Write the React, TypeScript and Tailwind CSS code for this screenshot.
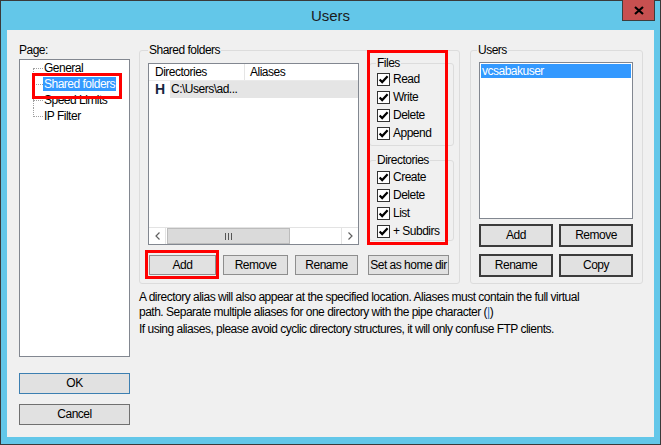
import React from 'react'

const Btn = ({ label, className = '' }: { label: string; className?: string }) => (
  <div className={`flex items-center justify-center whitespace-nowrap bg-[#e1e1e1] text-black ${className}`}>{label}</div>
)

const Check = ({ label }: { label: string }) => (
  <div className="flex h-[18px] items-center">
    <div className="flex h-[13px] w-[13px] items-center justify-center border border-[#333] bg-white">
      <svg width="11" height="11" viewBox="0 0 11 11">
        <path d="M1.6 5.4 L4.2 8.1 L9.6 2.3" fill="none" stroke="#000" strokeWidth="2.2" />
      </svg>
    </div>
    <span className="ml-[3px] whitespace-nowrap">{label}</span>
  </div>
)

type Pos = 'first' | 'mid' | 'last'

const TreeRow = ({ label, pos, selected }: { label: string; pos: Pos; selected?: boolean }) => (
  <div className="flex h-[16px] items-center">
    <div className="relative ml-[13px] h-[16px] w-[10px]">
      <div
        className={`absolute left-0 w-0 border-l border-dotted border-[#a0a0a0] ${
          pos === 'first' ? 'top-[8px] bottom-0' : pos === 'last' ? 'top-0 h-[9px]' : 'top-0 bottom-0'
        }`}
      />
      <div className="absolute left-0 top-[8px] w-[10px] border-t border-dotted border-[#a0a0a0]" />
    </div>
    <span className={`whitespace-nowrap px-[1px] leading-[14px] ${selected ? 'bg-[#3399ff] text-white' : ''}`}>{label}</span>
  </div>
)

const Chevron = ({ dir }: { dir: 'l' | 'r' }) => (
  <svg width="5" height="8" viewBox="0 0 5 8">
    <path d={dir === 'l' ? 'M4.5 0.5 L1 4 L4.5 7.5' : 'M0.5 0.5 L4 4 L0.5 7.5'} fill="none" stroke="#606060" strokeWidth="1.2" />
  </svg>
)

export default function App() {
  return (
    <div className="flex h-[445px] w-[661px] flex-col border border-[#3a3a3a] bg-[#63c7e9] font-['Liberation_Sans',Arial,sans-serif] text-[12px] leading-[15px] tracking-[-0.5px] text-black">
      {/* title bar */}
      <div className="relative flex h-[29px] items-center justify-center">
        <span className="text-[15px] tracking-normal text-[#1b1b1b]">Users</span>
        <div className="absolute right-[5px] top-[-1px] flex h-[21px] w-[33px] items-center justify-center border-x border-b border-[#3d3d3d] bg-[#c75050]">
          <svg width="10" height="9" viewBox="0 0 10 9">
            <path d="M1 1 L9 8 M9 1 L1 8" stroke="#000" strokeWidth="2.2" />
          </svg>
        </div>
      </div>

      {/* client */}
      <div className="mx-[6px] flex h-[407px] bg-[#f0f0f0]">
        {/* left column */}
        <div className="ml-[12px] flex w-[111px] flex-col pt-[13px]">
          <div>Page:</div>
          <div className="relative mt-[1px] h-[298px] border border-[#828790] bg-white">
            <TreeRow label="General" pos="first" />
            <TreeRow label="Shared folders" pos="mid" selected />
            <TreeRow label="Speed Limits" pos="mid" />
            <TreeRow label="IP Filter" pos="last" />
            <div className="pointer-events-none absolute left-[12px] top-[13px] h-[26px] w-[90px] border-[3px] border-[#ff0000]" />
          </div>
          <Btn label="OK" className="mt-[16px] h-[21px] border border-[#3c7fb1]" />
          <Btn label="Cancel" className="mt-[10px] h-[21px] border border-[#707070]" />
        </div>

        {/* right column */}
        <div className="ml-[9px] flex flex-col pt-[13px]">
          <div className="flex">
            {/* shared folders */}
            <fieldset className="h-[241px] w-[321px] rounded-[3px] border border-[#dcdcdc] pl-[8px]">
              <legend className="px-[1px] leading-[14px]">Shared folders</legend>
              <div className="flex items-start">
                <div className="mt-[6px] flex h-[182px] w-[211px] flex-col border border-[#828790] bg-white">
                  <div className="flex h-[17px] items-center border-b border-[#eaeaea]">
                    <div className="flex h-full w-[96px] items-center border-r border-[#e5e5e5] pl-[6px]">Directories</div>
                    <div className="pl-[5px]">Aliases</div>
                  </div>
                  <div className="flex h-[17px] items-center">
                    <span className="ml-[6px] w-[15px] text-[14px] font-bold tracking-normal text-[#17253f]">H</span>
                    <div className="flex h-full flex-1 items-center bg-[#e5e5e5] pl-[1px]">C:\Users\ad...</div>
                  </div>
                  <div className="flex-1" />
                  <div className="flex h-[17px] border-t border-[#e3e3e3]">
                    <div className="flex w-[17px] items-center justify-center border-r border-[#e3e3e3]">
                      <Chevron dir="l" />
                    </div>
                    <div className="ml-[1px] flex w-[123px] items-center justify-center gap-[2px] border border-[#bcbcbc] bg-[#dadada]">
                      <div className="h-[7px] w-[1px] bg-[#555]" />
                      <div className="h-[7px] w-[1px] bg-[#555]" />
                      <div className="h-[7px] w-[1px] bg-[#555]" />
                    </div>
                    <div className="flex-1" />
                    <div className="flex w-[17px] items-center justify-center border-l border-[#e3e3e3]">
                      <Chevron dir="r" />
                    </div>
                  </div>
                </div>

                {/* permissions */}
                <div className="relative ml-[10px] -mt-[1px] flex w-[85px] flex-col">
                  <fieldset className="rounded-[3px] border border-[#dcdcdc] pb-[3px] pl-[7px]">
                    <legend className="-ml-[1px] px-[1px] leading-[14px]">Files</legend>
                    <Check label="Read" />
                    <Check label="Write" />
                    <Check label="Delete" />
                    <Check label="Append" />
                  </fieldset>
                  <fieldset className="mt-[7px] rounded-[3px] border border-[#dcdcdc] pl-[7px] pt-[1px]">
                    <legend className="-ml-[1px] px-[1px] leading-[14px]">Directories</legend>
                    <Check label="Create" />
                    <Check label="Delete" />
                    <Check label="List" />
                    <Check label="+ Subdirs" />
                  </fieldset>
                  <div className="pointer-events-none absolute left-[-2px] top-[-6px] h-[195px] w-[81px] border-[3px] border-[#ff0000]" />
                </div>
              </div>

              <div className="mt-[10px] flex">
                <div className="relative ml-[1px]">
                  <Btn label="Add" className="h-[20px] w-[67px] border border-[#8e8e8e]" />
                  <div className="pointer-events-none absolute left-[-4px] top-[-5px] h-[29px] w-[74px] border-[3px] border-[#ff0000]" />
                </div>
                <Btn label="Remove" className="ml-[7px] h-[20px] w-[65px] border border-[#8e8e8e]" />
                <Btn label="Rename" className="ml-[7px] h-[20px] w-[63px] border border-[#8e8e8e]" />
                <Btn label="Set as home dir" className="ml-[10px] h-[20px] w-[81px] border border-[#8e8e8e]" />
              </div>
            </fieldset>

            {/* users */}
            <fieldset className="ml-[10px] h-[241px] w-[173px] rounded-[3px] border border-[#dcdcdc] pl-[8px]">
              <legend className="-ml-[2px] px-[1px] leading-[14px]">Users</legend>
              <div className="mt-[5px] h-[157px] w-[154px] border border-[#828790] bg-white p-[1px]">
                <div className="flex h-[14px] items-center bg-[#3399ff] pl-[1px] text-white">vcsabakuser</div>
              </div>
              <div className="mt-[5px] flex">
                <Btn label="Add" className="h-[23px] w-[74px] border-2 border-[#3b3b3b]" />
                <Btn label="Remove" className="ml-[6px] h-[23px] w-[74px] border-2 border-[#3b3b3b]" />
              </div>
              <div className="mt-[7px] flex">
                <Btn label="Rename" className="h-[23px] w-[74px] border-2 border-[#3b3b3b]" />
                <Btn label="Copy" className="ml-[6px] h-[23px] w-[74px] border-2 border-[#3b3b3b]" />
              </div>
            </fieldset>
          </div>

          <p className="mt-[6px] whitespace-nowrap">
            A directory alias will also appear at the specified location. Aliases must contain the full virtual
            <br />
            path. Separate multiple aliases for one directory with the pipe character (<span className="text-[#2a6ebd]">|</span>)
          </p>
          <p className="mt-[2px] whitespace-nowrap">If using aliases, please avoid cyclic directory structures, it will only confuse FTP clients.</p>
        </div>
      </div>
    </div>
  )
}
